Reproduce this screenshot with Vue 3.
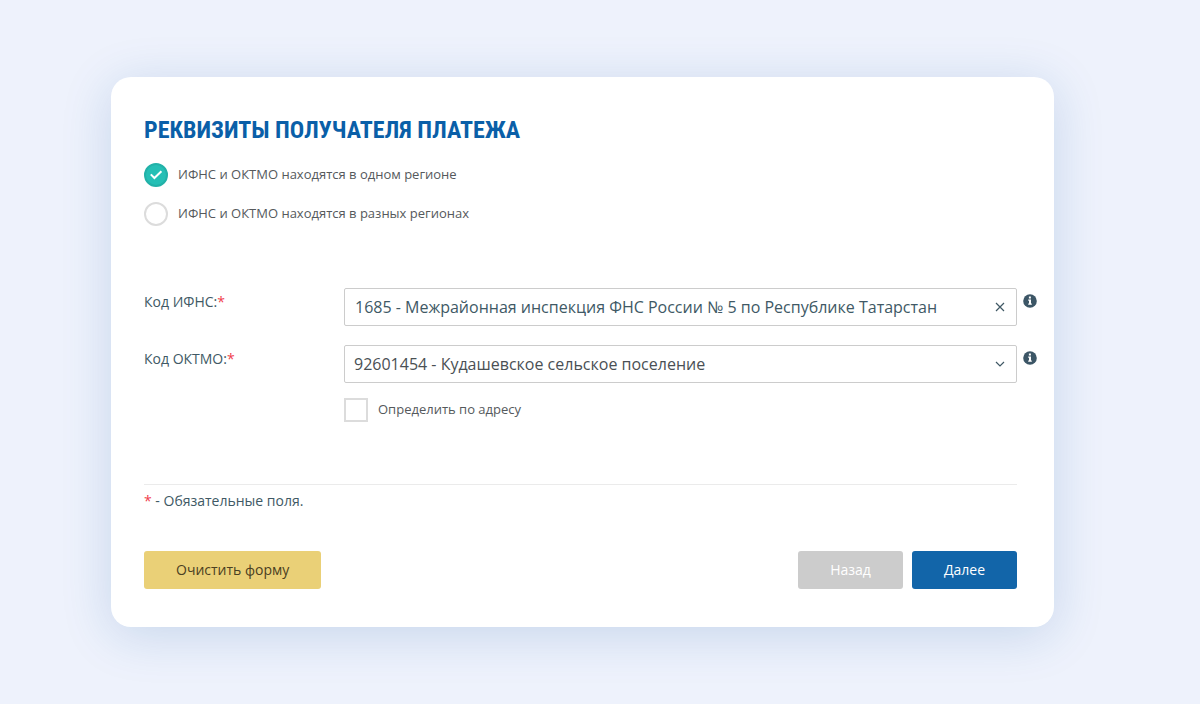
<script setup>
import { ref } from 'vue'

const regionMode = ref('same')
const ifns = ref('1685 - Межрайонная инспекция ФНС России № 5 по Республике Татарстан')
const oktmo = ref('92601454 - Кудашевское сельское поселение')
const byAddress = ref(false)

const modes = [
  { value: 'same', label: 'ИФНС и ОКТМО находятся в одном регионе' },
  { value: 'different', label: 'ИФНС и ОКТМО находятся в разных регионах' },
]

function clearForm() {
  regionMode.value = 'same'
  ifns.value = ''
  oktmo.value = ''
  byAddress.value = false
}
</script>

<template>
  <main class="page">
    <form class="card" @submit.prevent>
      <h1 class="title">РЕКВИЗИТЫ ПОЛУЧАТЕЛЯ ПЛАТЕЖА</h1>

      <div class="modes" role="radiogroup">
        <label v-for="mode in modes" :key="mode.value" class="option">
          <span class="mark round">
            <input v-model="regionMode" type="radio" name="mode" :value="mode.value" />
            <svg viewBox="0 0 24 24" aria-hidden="true"><path d="M6.8 11.4l3.6 3.6 7-6.8" /></svg>
          </span>
          <span>{{ mode.label }}</span>
        </label>
      </div>

      <div class="row">
        <label class="name" for="ifns">Код ИФНС:<span class="star">*</span></label>
        <div class="control">
          <input id="ifns" v-model="ifns" class="field" type="text" />
          <button class="clear" type="button" aria-label="Очистить" @click="ifns = ''">
            <svg viewBox="0 0 10 10" aria-hidden="true"><path d="M1 1l8 8M9 1L1 9" /></svg>
          </button>
        </div>
        <button class="info" type="button" aria-label="Справка">
          <svg viewBox="0 0 14 14" aria-hidden="true">
            <circle cx="7" cy="7" r="6.8" />
            <path d="M5.9 2.6h2v1.8h-2zM5.2 5.4h2.8v4h.8v1.4H5.2V9.4H6V6.8h-.8z" />
          </svg>
        </button>
      </div>

      <div class="row">
        <label class="name" for="oktmo">Код ОКТМО:<span class="star">*</span></label>
        <div class="control">
          <select id="oktmo" v-model="oktmo" class="field">
            <option value=""></option>
            <option>92601454 - Кудашевское сельское поселение</option>
          </select>
          <svg class="chevron" viewBox="0 0 10 10" aria-hidden="true"><path d="M1 3l4 4 4-4" /></svg>
        </div>
        <button class="info" type="button" aria-label="Справка">
          <svg viewBox="0 0 14 14" aria-hidden="true">
            <circle cx="7" cy="7" r="6.8" />
            <path d="M5.9 2.6h2v1.8h-2zM5.2 5.4h2.8v4h.8v1.4H5.2V9.4H6V6.8h-.8z" />
          </svg>
        </button>
      </div>

      <label class="option address">
        <span class="mark">
          <input v-model="byAddress" type="checkbox" />
          <svg viewBox="0 0 24 24" aria-hidden="true"><path d="M6.8 11.4l3.6 3.6 7-6.8" /></svg>
        </span>
        <span>Определить по адресу</span>
      </label>

      <footer class="footer">
        <p class="note"><span class="star">*</span> - Обязательные поля.</p>
        <div class="actions">
          <button class="btn reset" type="button" @click="clearForm">Очистить форму</button>
          <button class="btn back" type="button">Назад</button>
          <button class="btn next" type="submit">Далее</button>
        </div>
      </footer>
    </form>
  </main>
</template>

<style>
body {
  background: #eef2fc;
}
</style>

<style scoped>
* {
  box-sizing: border-box;
}

.page {
  padding: 77px 146px 77px 111px;
  font-family: "Open Sans", "Noto Sans", sans-serif;
  font-size: 14px;
  line-height: 20px;
  color: #405965;
}

.card {
  padding: 36px 17px 38px 33px;
  background: #fff;
  border-radius: 20px;
  box-shadow: 0 8px 50px rgba(20, 90, 160, 0.18);
}

.title {
  margin: 0;
  font-family: "Roboto Condensed", "Liberation Sans Narrow", Roboto, sans-serif;
  font-size: 24px;
  font-weight: 700;
  line-height: 34px;
  color: #0a5fa8;
}

.modes {
  display: flex;
  flex-direction: column;
  gap: 15px;
  margin: 16px 0 62px;
}

.option {
  display: flex;
  align-items: flex-start;
  gap: 10px;
  font-size: 13px;
  line-height: 22px;
  color: #55595c;
}

.mark {
  display: grid;
  width: 24px;
  height: 24px;
}

.mark input,
.mark svg {
  grid-area: 1 / 1;
  width: 24px;
  height: 24px;
  margin: 0;
}

.mark input {
  appearance: none;
  background: #fff;
  border: 2px solid #dcdcdc;
}

.round input {
  border-radius: 50%;
}

.mark input:checked {
  background: #25bfb5;
  border-color: #22b1a8;
}

.mark svg {
  pointer-events: none;
  visibility: hidden;
  fill: none;
  stroke: #fff;
  stroke-width: 2;
}

.mark input:checked + svg {
  visibility: visible;
}

.row {
  display: grid;
  grid-template-columns: 200px 1fr 20px;
  align-items: start;
  margin-bottom: 19px;
}

.name {
  padding-top: 4px;
}

.star {
  color: #f03e4d;
}

.control {
  display: grid;
  align-items: center;
}

.field {
  grid-area: 1 / 1;
  width: 100%;
  height: 38px;
  padding: 0 40px 0 10px;
  font: inherit;
  font-size: 16px;
  color: #405965;
  background: #fff;
  border: 1px solid #ccc;
  border-radius: 2px;
  outline: none;
}

select.field {
  appearance: none;
  padding-left: 9px;
  color: #4a5054;
}

.clear,
.chevron {
  grid-area: 1 / 1;
  justify-self: end;
  width: 10px;
  height: 10px;
  margin-right: 12px;
}

.clear,
.info {
  padding: 0;
  background: none;
  border: 0;
}

.clear svg,
.info svg {
  display: block;
  width: 100%;
}

.clear path,
.chevron path {
  fill: none;
  stroke: #405965;
  stroke-width: 1.2;
}

.chevron {
  pointer-events: none;
}

.info {
  justify-self: end;
  width: 14px;
  margin-top: 6px;
}

.info circle {
  fill: #3c5666;
}

.info path {
  fill: #fff;
}

.address {
  margin: -4px 0 62px 200px;
}

.footer {
  margin-right: 20px;
  border-top: 1px solid #ebebeb;
}

.note {
  margin: 6px 0 40px;
}

.actions {
  display: flex;
  gap: 9px;
}

.btn {
  height: 38px;
  padding: 0 32px;
  font: inherit;
  color: #fff;
  border: 0;
  border-radius: 3px;
}

.reset {
  margin-right: auto;
  color: #4b4022;
  background: #ead077;
}

.back {
  background: #ccc;
}

.next {
  background: #1265a9;
}
</style>
